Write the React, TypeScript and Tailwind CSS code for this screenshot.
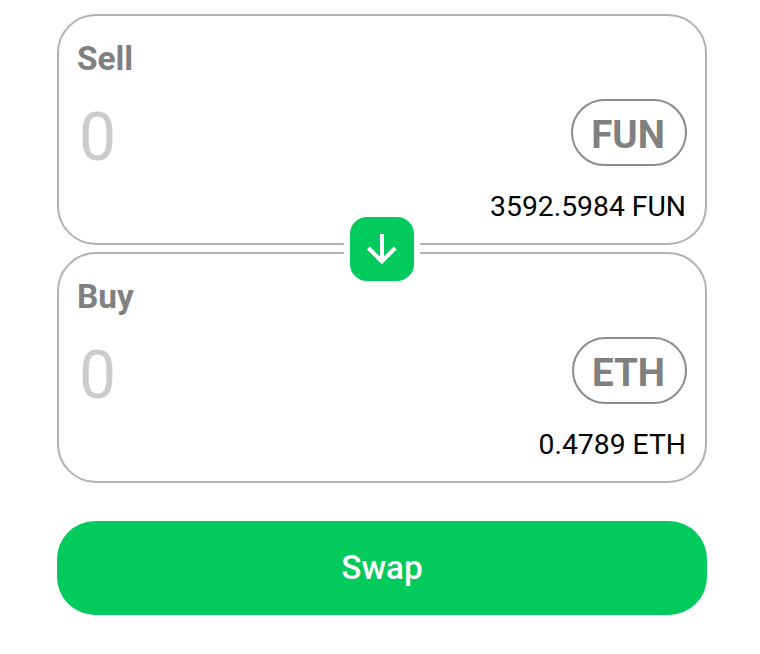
import React from "react";

type PanelProps = { label: string; token: string; balance: string; pill: string };

function Panel({ label, token, balance, pill }: PanelProps) {
  return (
    <section className="flex h-[231px] w-full flex-col rounded-[39px] border-2 border-[#b2b2b2] bg-white px-[18px] pt-[23px]">
      <h2 className="h-[40px] text-[33.3px] font-bold leading-[40px] text-[#808080]">{label}</h2>
      <div className="mt-[20px] flex h-[67px] items-center justify-between">
        <span className="pl-[2px] pt-[9px] text-[66px] leading-[67px] text-[#cccccc]">0</span>
        <button className={`flex h-[67px] items-center justify-center rounded-full border-2 border-[#8c8c8c] pr-[2px] pt-[5px] text-[38.5px] font-bold leading-none text-[#808080] ${pill}`}>{token}</button>
      </div>
      <p className="mt-[23px] pr-[1px] text-right text-[28.3px] leading-[36px] text-black">{balance}</p>
    </section>
  );
}

export default function App() {
  return (
    <main className="h-[654px] w-[760px] overflow-hidden bg-white pl-[57px] pt-[14px] font-['Roboto',sans-serif]">
      <div className="relative flex w-[650px] flex-col gap-[7px]">
        <Panel label="Sell" token="FUN" balance="3592.5984 FUN" pill="w-[116px]" />
        <Panel label="Buy" token="ETH" balance="0.4789 ETH" pill="w-[115px]" />
        <button aria-label="Switch tokens" className="absolute left-[287px] top-[197px] flex size-[76px] items-center justify-center rounded-[23px] border-[6px] border-white bg-[#02ca5c]">
          <svg width="32" height="32" viewBox="0 0 32 32" fill="none" stroke="white" strokeWidth="4">
            <path d="M16 1V28M2.4 15L15.8 28.4L29.2 15" />
          </svg>
        </button>
      </div>
      <button className="mt-[38px] flex h-[94px] w-[650px] items-center justify-center rounded-[38px] bg-[#02ca5c] text-[33.3px] font-medium text-white">Swap</button>
    </main>
  );
}
